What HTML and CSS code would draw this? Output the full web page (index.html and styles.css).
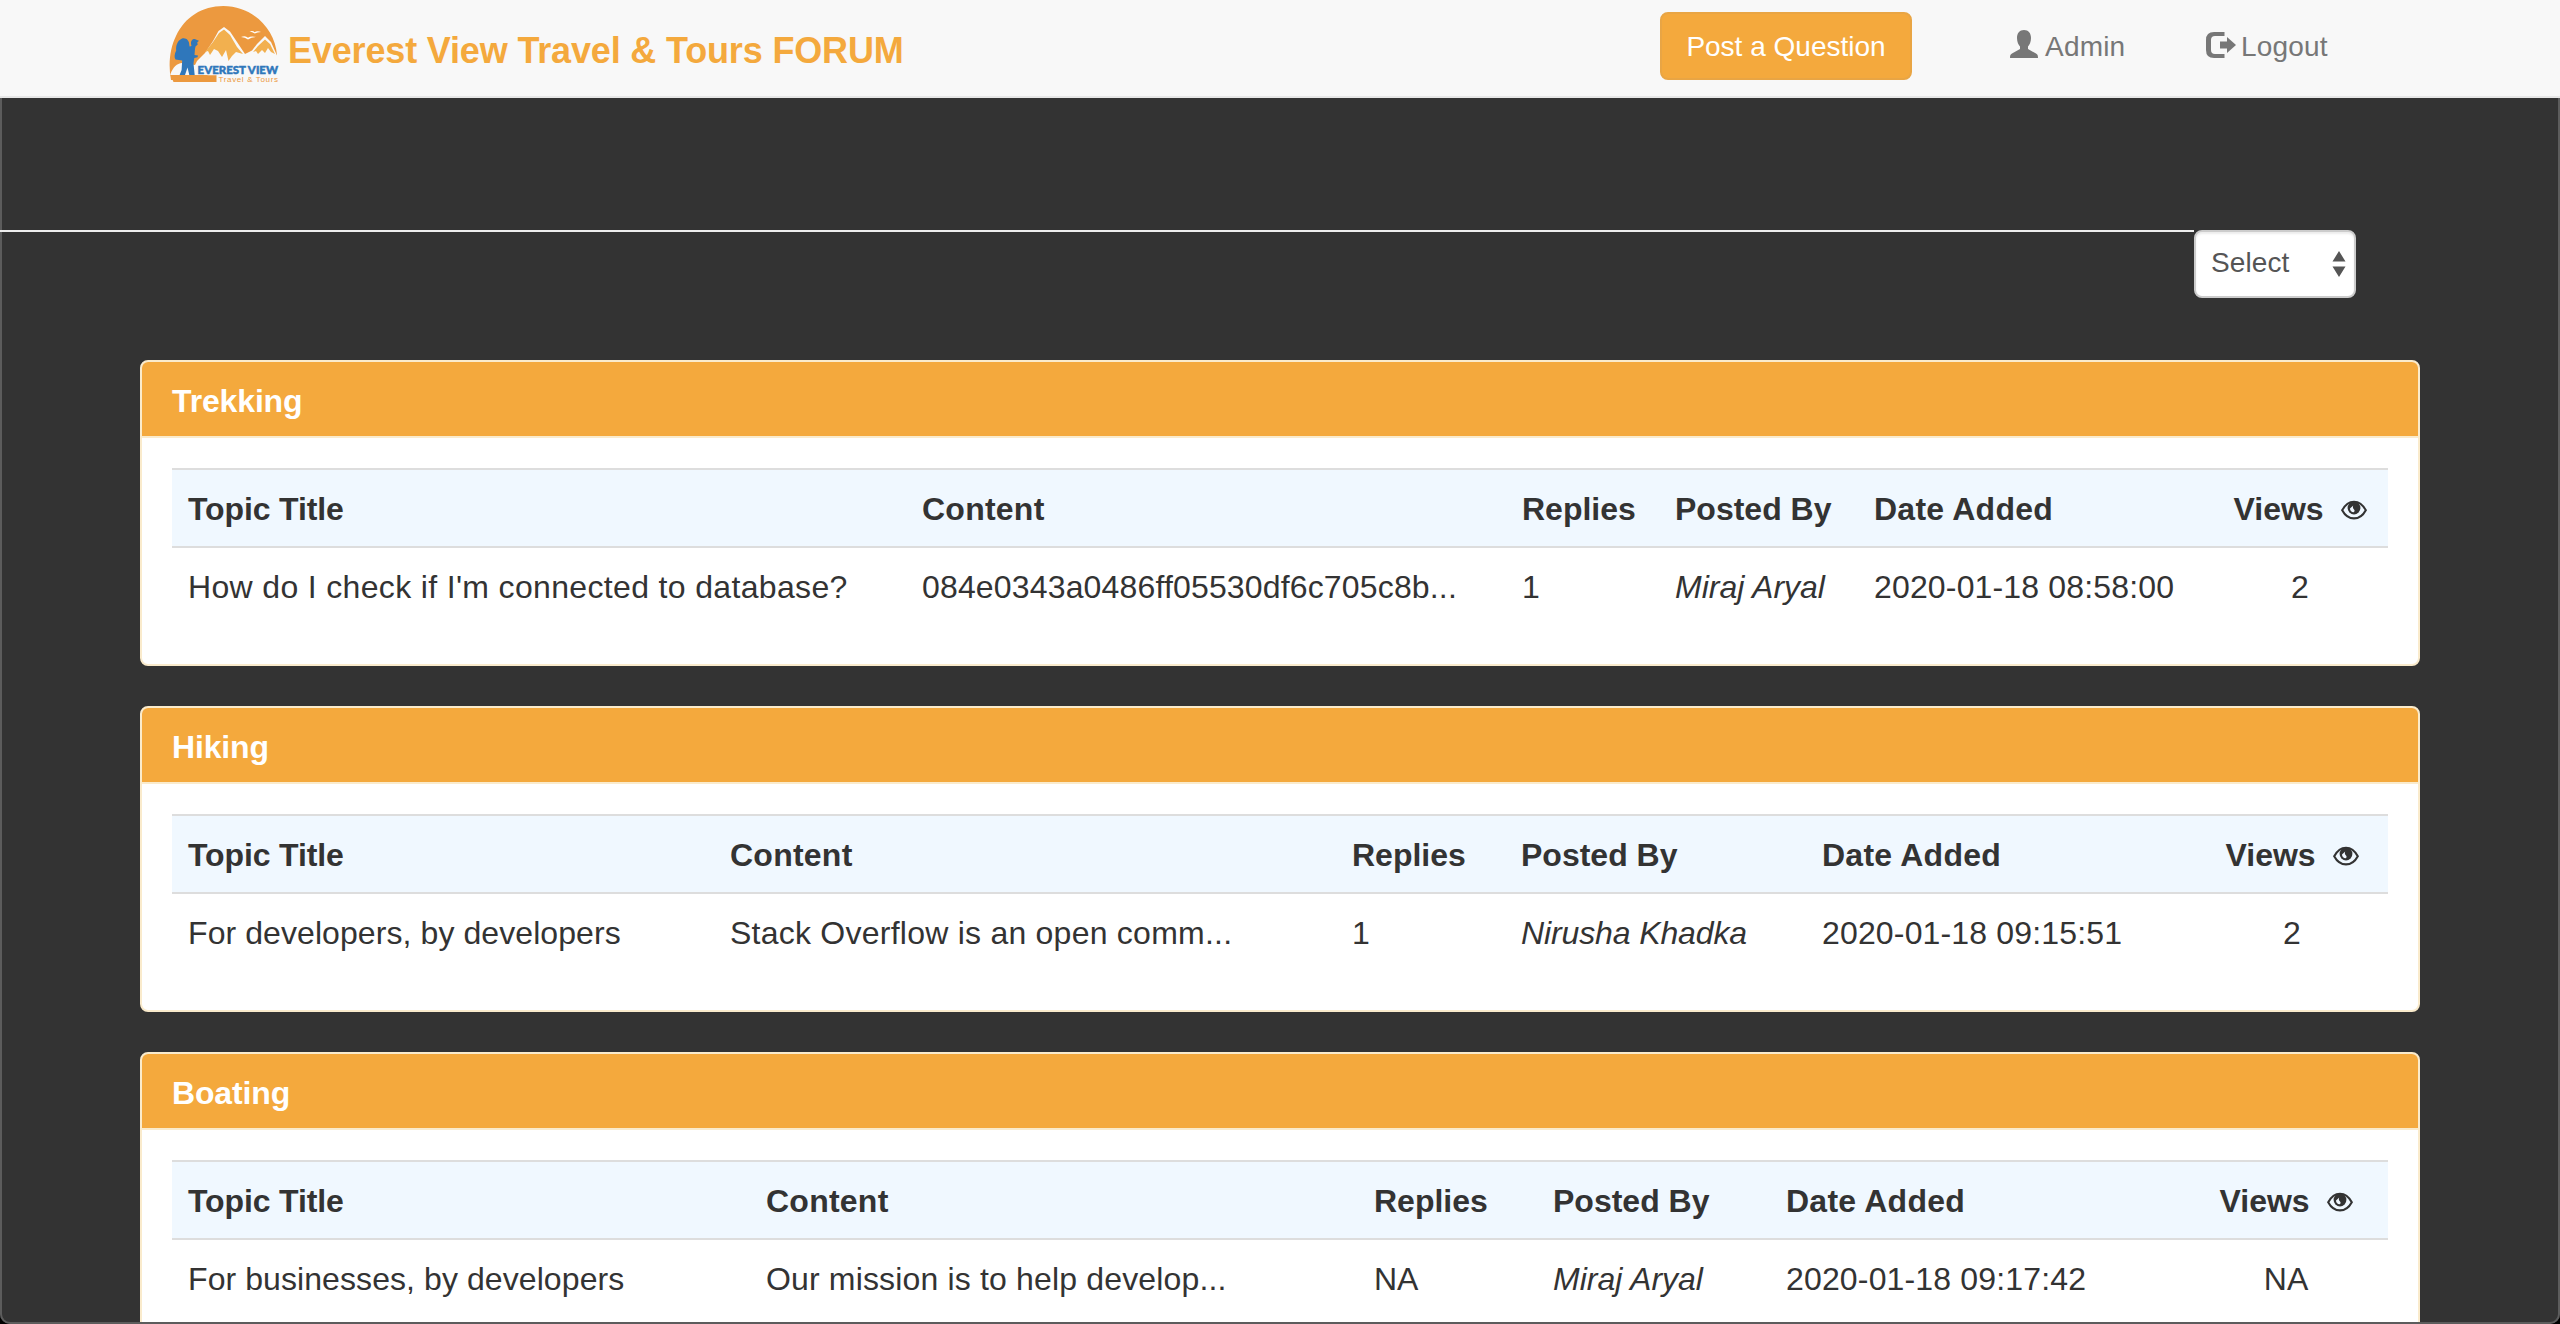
FILE: index.html
```html
<!DOCTYPE html>
<html lang="en">
<head>
<meta charset="utf-8">
<title>Everest View Travel &amp; Tours FORUM</title>
<link rel="stylesheet" href="styles.css">
</head>
<body>
<svg class="defs" width="0" height="0">
  <symbol id="eye" viewBox="0 0 26 20">
    <path d="M1.200 10.200C4 5 8 1.700 13 1.700S22 5 24.800 10.200C22 15.400 18 18.400 13 18.400S4 15.400 1.200 10.200Z" fill="none" stroke="currentColor" stroke-width="2.100"/>
    <circle cx="13" cy="8" r="6.400" fill="currentColor"/>
    <path d="M12.200 5.500L9 8.500C9 10.500 10.300 12.200 12.600 12.300C14 11.500 13.800 10 12.800 9.200C11.800 8.200 11.600 7 12.200 5.500Z" fill="#f0f7ff"/>
  </symbol>
</svg>
<header class="navbar">
  <a class="brand">
    <svg class="logo" viewBox="0 0 110 80">
      <path d="M1 74C-2 58 0 42 6 30C15 11 32 0 53.300 0C82 0 105 22 107 49L100 62H50L30 74Z" fill="#ec993f"/>
      <path d="M.5 68C3 61 7 57.500 12 57L25 59L27 55L35 47L43 35L48.500 25L54 21L60 25.500L67 36L75 48L82 44.500L87 38L95 30L101 36L107 49.500L109 62V77H46.500V69H.5Z" fill="#f8f8f8"/>
      <path d="M35 46L43 36L49 27L54 23.500L60 29L67 41L73 48L66 46L62 50L58.500 55L56 44L52 51L48 45L44 43L40 49L38 45Z" fill="#f2b04f"/>
      <path d="M83 46L88 40L95 33.500L100 38L105 48L101 46L98 42L95 47L92 44L88 48L86 45Z" fill="#f2b04f"/>
      <path d="M71 31Q75.500 29 78 31.800Q81 29.500 86 31Q81 31 78 33.600Q75 31.300 71 31ZM79.500 25.500Q83 24.200 84.600 26.200Q87 24.500 91 26Q87 26 84.800 27.600Q82.500 26 79.500 25.500Z" fill="#fff"/>
      <path d="M.5 69.300H46.500V76H3.500Z" fill="#ec993f"/>
      <path d="M12 32.500C16 31.300 19.500 34.500 19.300 39L19.600 40.600L21.500 40C20.600 37 20.800 33.500 24 33C26 32.900 26.700 34.200 29 34.700L27.200 36.500L27.700 38.500L25.500 40.600L25 43L24.500 49L28 49.500L27.500 51.200L24.300 52L23.500 57.500L24.700 69H19.300L17.500 61.500L15 69H9.600L11.600 64L12.200 54.500L5.500 53.500C4 51.500 4.500 47.500 6.200 44.500C5.700 39.500 7.500 34.500 12 32.500Z" fill="#2f77bb"/>
      <text class="logo-name" x="27.600" y="67.500" textLength="80.400" lengthAdjust="spacingAndGlyphs">EVEREST VIEW</text>
      <text class="logo-tag" x="48.500" y="75.800" textLength="59.500">Travel &amp; Tours</text>
    </svg>
    <span class="brand-text">Everest View Travel &amp; Tours FORUM</span>
  </a>
  <nav class="menu">
    <a class="btn-post">Post a Question</a>
    <a class="nav-link admin">
      <svg class="ico" viewBox="0 0 28 28"><path d="M14 0C18.500 0 21 3 21 8C21 12 19.500 15 18 16.500V19L26 23.500C27.500 24.500 28 25 28 28H0C0 25 .5 24.500 2 23.500L10 19V16.500C8.500 15 7 12 7 8C7 3 9.500 0 14 0Z" fill="currentColor"/></svg>
      <span>Admin</span>
    </a>
    <a class="nav-link logout">
      <svg class="ico ico-out" viewBox="0 0 30 26"><path d="M18.500 0V4H9Q5 4 5 8V18Q5 22 9 22H18.500V26H8Q0 26 0 18V8Q0 0 8 0ZM21 5L30 13L21 21V16.500H14V9.500H21Z" fill="currentColor"/></svg>
      <span>Logout</span>
    </a>
  </nav>
</header>
<main>
  <div class="filter">
    <hr class="rule">
    <div class="select">
      <span>Select</span>
      <svg class="arrows" viewBox="0 0 14 26"><path d="M7 0L13.500 10.500H.5ZM7 26L13.500 15.500H.5Z" fill="#555"/></svg>
    </div>
  </div>
  <div class="panels">
    <section class="panel">
      <h2 class="panel-title">Trekking</h2>
      <table class="topics trekking">
        <colgroup><col class="c1"><col class="c2"><col class="c3"><col class="c4"><col class="c5"><col class="c6"></colgroup>
        <thead><tr><th class="tight">Topic Title</th><th class="wide">Content</th><th>Replies</th><th>Posted By</th><th class="wide">Date Added</th><th class="views">Views <svg class="eye"><use href="#eye"/></svg></th></tr></thead>
        <tbody><tr><td class="question">How do I check if I'm connected to database?</td><td class="num">084e0343a0486ff05530df6c705c8b...</td><td>1</td><td><em>Miraj Aryal</em></td><td class="num">2020-01-18 08:58:00</td><td class="views">2</td></tr></tbody>
      </table>
    </section>
    <section class="panel">
      <h2 class="panel-title">Hiking</h2>
      <table class="topics hiking">
        <colgroup><col class="c1"><col class="c2"><col class="c3"><col class="c4"><col class="c5"><col class="c6"></colgroup>
        <thead><tr><th class="tight">Topic Title</th><th class="wide">Content</th><th>Replies</th><th>Posted By</th><th class="wide">Date Added</th><th class="views">Views <svg class="eye"><use href="#eye"/></svg></th></tr></thead>
        <tbody><tr><td class="title">For developers, by developers</td><td class="wide">Stack Overflow is an open comm...</td><td>1</td><td class="tight"><em>Nirusha Khadka</em></td><td class="num">2020-01-18 09:15:51</td><td class="views">2</td></tr></tbody>
      </table>
    </section>
    <section class="panel">
      <h2 class="panel-title">Boating</h2>
      <table class="topics boating">
        <colgroup><col class="c1"><col class="c2"><col class="c3"><col class="c4"><col class="c5"><col class="c6"></colgroup>
        <thead><tr><th class="tight">Topic Title</th><th class="wide">Content</th><th>Replies</th><th>Posted By</th><th class="wide">Date Added</th><th class="views">Views <svg class="eye"><use href="#eye"/></svg></th></tr></thead>
        <tbody><tr><td class="title">For businesses, by developers</td><td class="num">Our mission is to help develop...</td><td>NA</td><td><em>Miraj Aryal</em></td><td class="num">2020-01-18 09:17:42</td><td class="views">NA</td></tr></tbody>
      </table>
    </section>
  </div>
</main>
<div class="window-edge"></div>
</body>
</html>
```
FILE: styles.css
```css
* { box-sizing: border-box; }
html { background: #000; height: 1324px; overflow: hidden; }
body {
  margin: 0;
  height: 1324px;
  overflow: hidden;
  border-radius: 0 0 10px 10px;
  background: #333;
  color: #333;
  font: 32px/46px "Helvetica Neue", Helvetica, "Liberation Sans", Arial, sans-serif;
}
.defs { display: block; width: 0; height: 0; }
.navbar {
  height: 98px;
  display: flex;
  justify-content: space-between;
  padding: 0 230px 0 170px;
  background: #f8f8f8;
  border-bottom: 2px solid #e7e7e7;
}
.brand { display: flex; padding-top: 6px; color: #f4a93d; }
.logo { width: 110px; height: 80px; overflow: visible; }
.logo-name { font: 900 11.500px Lato, sans-serif; fill: #2f77bb; stroke: #2f77bb; stroke-width: .5px; }
.logo-tag { font: 8px "Liberation Sans", sans-serif; fill: #ec993f; }
.brand-text { margin: 20px 0 0 8px; font-size: 36px; line-height: 50px; font-weight: bold; letter-spacing: -.16px; white-space: nowrap; }
.menu { display: flex; font-size: 28px; line-height: 40px; color: #777; }
.btn-post {
  width: 252px;
  height: 68px;
  margin: 12px 98px 0 0;
  padding: 13px 0 0;
  text-align: center;
  color: #fff;
  background: #f4a93d;
  border: 2px solid #e9a544;
  border-radius: 8px;
}
.nav-link { display: flex; margin-top: 27px; letter-spacing: .2px; }
.admin { width: 196px; gap: 7px; }
.logout { width: 124px; gap: 5px; }
.ico { flex: none; width: 28px; height: 28px; margin-top: 3px; }
.ico-out { width: 30px; height: 26px; margin-top: 5px; }
.filter { display: flex; margin-top: 132px; height: 130px; padding-right: 204px; }
.rule { position: relative; z-index: 1; flex: 1; height: 2px; margin: 0; border: 0; background: #eee; }
.select {
  display: flex;
  justify-content: space-between;
  width: 162px;
  height: 68px;
  padding: 11px 8px 0 15px;
  background: #fff;
  color: #555;
  border: 2px solid #ccc;
  border-radius: 8px;
  box-shadow: inset 0 2px 2px rgba(0, 0, 0, .075);
  font-size: 28px;
  line-height: 40px;
  letter-spacing: .1px;
}
.arrows { width: 14px; height: 26px; margin-top: 8px; }
.panels { display: flex; flex-direction: column; gap: 40px; width: 2280px; margin: 0 auto; }
.panel { height: 306px; flex: none; background: #fff; border: 2px solid #faebcc; border-radius: 8px; }
.panel-title {
  height: 76px;
  margin: 0 0 30px;
  padding: 16px 30px 0;
  font-size: 32px;
  line-height: 46px;
  letter-spacing: -.15px;
  color: #fff;
  background: #f4a93d;
  border-bottom: 2px solid #faebcc;
  border-radius: 6px 6px 0 0;
}
.topics { width: 2216px; margin-left: 30px; table-layout: fixed; border-collapse: separate; border-spacing: 0; }
.topics th, .topics td { height: 78px; padding: 16px 0 14px 16px; text-align: left; white-space: nowrap; border-top: 2px solid #ddd; }
.topics th { background: #f0f8ff; }
.topics .views { padding-left: 0; text-align: center; }
.topics .question { letter-spacing: .34px; }
.topics .title { letter-spacing: .08px; }
.topics .num { letter-spacing: .16px; }
.topics .wide { letter-spacing: .24px; }
.topics .tight { letter-spacing: -.12px; }
.eye { display: inline-block; width: 26px; height: 20px; margin-left: 8px; vertical-align: 0; }
.trekking .c1 { width: 734px; } .trekking .c2 { width: 600px; } .trekking .c3 { width: 153px; }
.trekking .c4 { width: 199px; } .trekking .c5 { width: 354px; } .trekking .c6 { width: 176px; }
.hiking .c1 { width: 542px; } .hiking .c2 { width: 622px; } .hiking .c3 { width: 169px; }
.hiking .c4 { width: 301px; } .hiking .c5 { width: 390px; } .hiking .c6 { width: 192px; }
.boating .c1 { width: 578px; } .boating .c2 { width: 608px; } .boating .c3 { width: 179px; }
.boating .c4 { width: 233px; } .boating .c5 { width: 414px; } .boating .c6 { width: 204px; }
.window-edge {
  position: absolute;
  inset: 98px 0 auto 0;
  height: 1226px;
  border: 2px solid #5c5c5c;
  border-top: 0;
  border-radius: 0 0 10px 10px;
}
```
